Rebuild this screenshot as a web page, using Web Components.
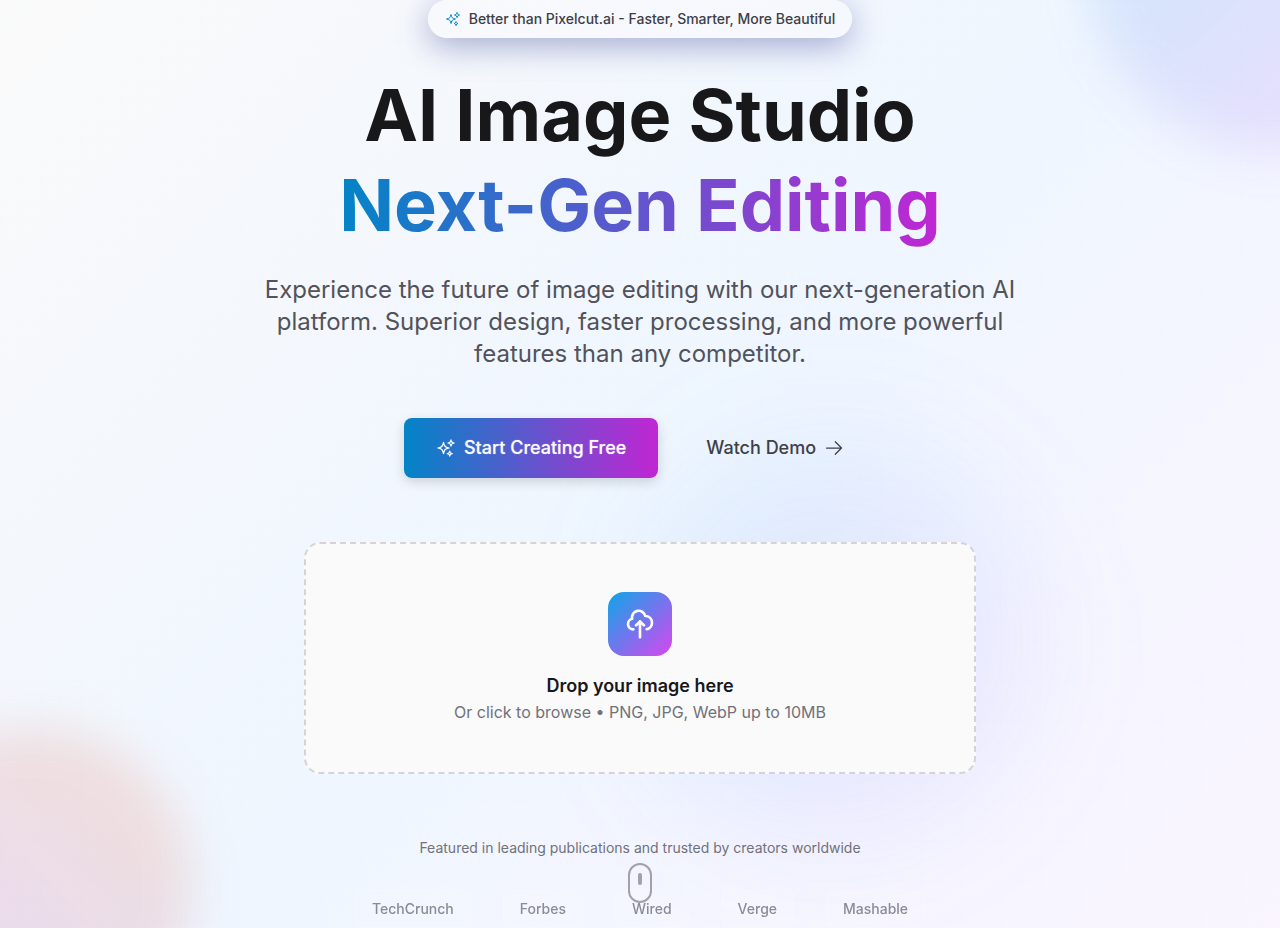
<!DOCTYPE html>
<html lang="en">
<head>
<meta charset="utf-8">
<meta name="viewport" content="width=device-width, initial-scale=1">
<title>AI Image Studio</title>
<style>
  body { margin: 0; font-family: Inter, "Liberation Sans", sans-serif; color: #18181b; }
</style>
</head>
<body>
<studio-hero>
  <glass-pill slot="badge">Better than Pixelcut.ai - Faster, Smarter, More Beautiful</glass-pill>
  <hero-title slot="title" accent="Next-Gen Editing">AI Image Studio</hero-title>
  <span slot="lead">Experience the future of image editing with our next-generation AI platform. Superior design, faster processing, and more powerful features than any competitor.</span>
  <action-button slot="actions" variant="primary" icon="sparkles">Start Creating Free</action-button>
  <action-button slot="actions" variant="ghost" icon="arrow">Watch Demo</action-button>
  <drop-zone slot="upload">
    <span slot="title">Drop your image here</span>
    <span slot="hint">Or click to browse • PNG, JPG, WebP up to 10MB</span>
  </drop-zone>
  <press-list slot="press" names="TechCrunch,Forbes,Wired,Verge,Mashable">Featured in leading publications and trusted by creators worldwide</press-list>
</studio-hero>
<script>
class BaseElement extends HTMLElement {
  render(html) {
    const t = document.createElement('template');
    t.innerHTML = '<style>*{box-sizing:border-box}</style>' + html;
    this.attachShadow({ mode: 'open' }).append(t.content.cloneNode(true));
  }
}

const ICONS = {
  sparkles: ['1.5', 'M9.813 15.904 9 18.75l-.813-2.846a4.5 4.5 0 0 0-3.09-3.09L2.25 12l2.846-.813a4.5 4.5 0 0 0 3.09-3.09L9 5.25l.813 2.846a4.5 4.5 0 0 0 3.09 3.09L15.75 12l-2.846.813a4.5 4.5 0 0 0-3.09 3.09ZM18.259 8.715 18 9.75l-.259-1.035a3.375 3.375 0 0 0-2.455-2.456L14.25 6l1.036-.259a3.375 3.375 0 0 0 2.455-2.456L18 2.25l.259 1.035a3.375 3.375 0 0 0 2.456 2.456L21.75 6l-1.035.259a3.375 3.375 0 0 0-2.456 2.456ZM16.894 20.567 16.5 21.75l-.394-1.183a2.25 2.25 0 0 0-1.423-1.423L13.5 18.75l1.183-.394a2.25 2.25 0 0 0 1.423-1.423l.394-1.183.394 1.183a2.25 2.25 0 0 0 1.423 1.423l1.183.394-1.183.394a2.25 2.25 0 0 0-1.423 1.423Z'],
  arrow: ['1.5', 'M13.5 4.5 21 12m0 0-7.5 7.5M21 12H3'],
  upload: ['2', 'M7 16a4 4 0 0 1-.88-7.903A5 5 0 1 1 15.9 6L16 6a5 5 0 0 1 1 9.9M15 13l-3-3m0 0-3 3m3-3v12']
};

customElements.define('line-icon', class extends BaseElement {
  connectedCallback() {
    const [width, path] = ICONS[this.getAttribute('name')];
    this.render(`<style>
      :host { display: block; flex: none; width: 20px; height: 20px; }
      svg { display: block; width: 100%; height: 100%; }
    </style>
    <svg viewBox="0 0 24 24" fill="none" stroke="currentColor" stroke-width="${width}" stroke-linecap="round" stroke-linejoin="round" aria-hidden="true"><path d="${path}"/></svg>`);
  }
});

customElements.define('glass-pill', class extends BaseElement {
  connectedCallback() {
    this.render(`<style>
      :host { display: flex; align-items: center; gap: 8px; padding: 8px 16px; box-sizing: border-box;
        border: 1px solid rgba(255,255,255,.2); border-radius: 999px; background: rgba(250,250,253,.5);
        box-shadow: 0 8px 32px rgba(31,38,135,.37);
        font-size: 14px; line-height: 20px; font-weight: 500; color: #3f3f46; }
      line-icon { width: 16px; height: 16px; color: #0284c7; }
    </style>
    <line-icon name="sparkles"></line-icon><slot></slot>`);
  }
});

customElements.define('hero-title', class extends BaseElement {
  connectedCallback() {
    this.render(`<style>
      :host { display: block; }
      h1 { margin: 0; font-size: 72px; line-height: 90px; font-weight: 700; text-align: center; }
      .accent { color: transparent; background: linear-gradient(90deg, #0284c7, #c026d3);
        -webkit-background-clip: text; background-clip: text; }
    </style>
    <h1><slot></slot><br><span class="accent">${this.getAttribute('accent')}</span></h1>`);
  }
});

customElements.define('action-button', class extends BaseElement {
  connectedCallback() {
    const icon = `<line-icon name="${this.getAttribute('icon')}"></line-icon>`;
    const primary = this.getAttribute('variant') === 'primary';
    this.render(`<style>
      :host { display: block; }
      button { display: flex; align-items: center; gap: 8px; height: 60px; padding: 0 32px; border: 0;
        border-radius: 8px; font: 500 18px/28px Inter, "Liberation Sans", sans-serif; cursor: pointer; white-space: nowrap; }
      .primary { color: #fafafa; background: linear-gradient(90deg, #0284c7, #c026d3);
        box-shadow: 0 4px 12px rgba(0,0,0,.15); text-shadow: 0 0 1px rgba(250,250,250,.6); }
      .ghost { color: #3f3f46; background: none; }
    </style>
    <button type="button" class="${primary ? 'primary' : 'ghost'}">${primary ? icon : ''}<slot></slot>${primary ? '' : icon}</button>`);
  }
});

customElements.define('drop-zone', class extends BaseElement {
  connectedCallback() {
    this.render(`<style>
      :host { display: block; }
      label { display: flex; flex-direction: column; align-items: center; padding: 48px; text-align: center;
        border: 2px dashed #d4d4d8; border-radius: 16px; background: #fafafa; cursor: pointer; }
      input { position: absolute; width: 1px; height: 1px; opacity: 0; }
      .tile { display: grid; place-items: center; width: 64px; height: 64px; margin-bottom: 16px;
        border-radius: 16px; color: #fff; background: linear-gradient(135deg, #0ea5e9, #d946ef); }
      .tile line-icon { width: 32px; height: 32px; }
      .title { font-size: 18px; line-height: 28px; font-weight: 600; }
      .hint { font-size: 16px; line-height: 24px; color: #71717a; }
    </style>
    <label>
      <input type="file" accept="image/png,image/jpeg,image/webp">
      <span class="tile"><line-icon name="upload"></line-icon></span>
      <span class="title"><slot name="title"></slot></span>
      <span class="hint"><slot name="hint"></slot></span>
    </label>`);
  }
});

customElements.define('press-list', class extends BaseElement {
  connectedCallback() {
    const items = this.getAttribute('names').split(',').map(n => `<li>${n}</li>`).join('');
    this.render(`<style>
      :host { display: block; font-size: 14px; line-height: 20px; color: #71717a; text-align: center; }
      p { margin: 0 0 32px; }
      ul { display: flex; flex-wrap: wrap; justify-content: center; gap: 32px; margin: 0; padding: 0;
        list-style: none; opacity: .8; }
      li { padding: 8px 16px; border: 1px solid rgba(255,255,255,.2); border-radius: 8px;
        background: rgba(255,255,255,.1); font-weight: 500; }
    </style>
    <p><slot></slot></p><ul>${items}</ul>`);
  }
});

customElements.define('scroll-hint', class extends BaseElement {
  connectedCallback() {
    this.render(`<style>
      :host { display: flex; justify-content: center; box-sizing: border-box; width: 24px; height: 40px;
        padding-top: 8px; border: 2px solid #a1a1aa; border-radius: 12px; }
      i { width: 4px; height: 12px; border-radius: 2px; background: #a1a1aa; }
    </style><i></i>`);
  }
});

customElements.define('studio-hero', class extends BaseElement {
  connectedCallback() {
    this.render(`<style>
      :host { display: flex; flex-direction: column; align-items: center; justify-content: center;
        position: relative; isolation: isolate; overflow: hidden; box-sizing: border-box; min-height: 100vh;
        background: linear-gradient(135deg, #fafafa, #eff6ff 50%, #faf5ff); }
      .backdrop { position: absolute; inset: 0; z-index: -1; overflow: hidden; }
      .grid { position: absolute; inset: 0;
        background: linear-gradient(90deg, rgba(0,0,0,.004) 1px, transparent 1px) 0 0 / 20px 20px,
          linear-gradient(rgba(0,0,0,.004) 1px, transparent 1px) 0 0 / 20px 20px; }
      .blob { position: absolute; border-radius: 50%; }
      .sky { width: 384px; height: 384px; top: -232px; right: -192px; filter: blur(24px);
        background: linear-gradient(135deg, rgba(14,165,233,.16), rgba(217,70,239,.14)); }
      .warm { width: 320px; height: 320px; bottom: -120px; left: -128px; filter: blur(24px);
        background: linear-gradient(45deg, rgba(192,80,240,.16), rgba(234,100,12,.16)); }
      .core { width: 384px; height: 384px; left: 50%; top: 448px; filter: blur(64px);
        background: linear-gradient(135deg, rgba(14,165,233,.1), rgba(168,85,247,.1)); }
      .lead { max-width: 768px; margin: 24px 0 48px; font-size: 24px; line-height: 32px; text-align: center; color: #52525b; }
      .actions { display: flex; flex-wrap: wrap; justify-content: center; gap: 16px; margin-bottom: 64px; }
      .upload { width: 100%; max-width: 672px; margin-bottom: 64px; }
      slot[name=badge] { display: block; margin-bottom: 32px; }
      scroll-hint { position: absolute; bottom: 25px; left: 50%; margin-left: -12px; }
    </style>
    <div class="backdrop"><div class="blob sky"></div><div class="blob warm"></div><div class="blob core"></div><div class="grid"></div></div>
    <slot name="badge"></slot>
    <slot name="title"></slot>
    <p class="lead"><slot name="lead"></slot></p>
    <div class="actions"><slot name="actions"></slot></div>
    <div class="upload"><slot name="upload"></slot></div>
    <slot name="press"></slot>
    <scroll-hint></scroll-hint>`);
  }
});
</script>
</body>
</html>
